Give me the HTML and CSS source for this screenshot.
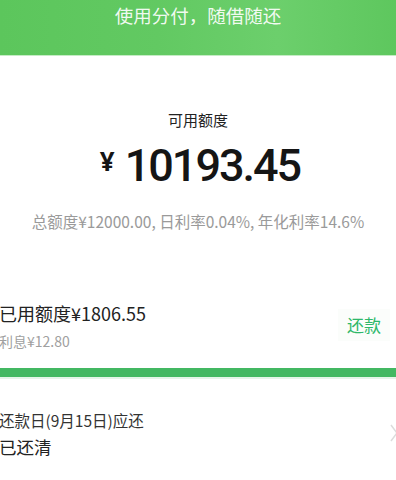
FILE: index.html
```html
<!DOCTYPE html>
<html lang="zh">
<head>
<meta charset="utf-8">
<link rel="stylesheet" href="styles.css">
</head>
<body>
<div class="header">使用分付，随借随还</div>
<section class="quota">
  <div class="quota-label">可用额度</div>
  <div class="quota-amount"><span class="yen">¥</span>10193.45</div>
  <div class="quota-info">总额度¥12000.00, 日利率0.04%, 年化利率14.6%</div>
</section>
<section class="used">
  <div class="used-text">
    <div class="used-title">已用额度¥1806.55</div>
    <div class="used-sub">利息¥12.80</div>
  </div>
  <div class="repay-btn">还款</div>
</section>
<div class="bar"></div>
<section class="due">
  <div class="due-text">
    <div class="due-title">还款日(9月15日)应还</div>
    <div class="due-status">已还清</div>
  </div>
  <svg class="chevron" width="10" height="20" viewBox="0 0 10 20"><path d="M2 2 L8 10 L2 18" fill="none" stroke="#dcdcdc" stroke-width="1.5"/></svg>
</section>
</body>
</html>
```
FILE: styles.css
```css
html, body {
  margin: 0;
  padding: 0;
  background: #fff;
  font-family: "Noto Sans CJK SC", "Noto Sans", sans-serif;
  width: 396px;
  height: 480px;
  overflow: hidden;
}
.header {
  height: 56px;
  background: linear-gradient(90deg, #5cc65c 0%, #62c962 40%, #6ccf6c 70%, #5ec75e 100%);
  color: rgba(255,255,255,0.92);
  font-size: 18.5px;
  text-align: center;
  line-height: 30px;
  box-sizing: border-box;
  border-bottom: 1px solid #c5ecc5;
}
.quota {
  display: flex;
  flex-direction: column;
  align-items: center;
  padding-top: 52px;
}
.quota-label {
  font-size: 15px;
  color: #222;
  line-height: 24px;
}
.quota-amount {
  margin-top: 3px;
  font-family: Roboto, "Noto Sans", sans-serif;
  font-size: 45px;
  font-weight: 500;
  color: #151515;
  line-height: 52px;
  letter-spacing: -2px;
  padding-left: 4px;
}
.yen {
  font-family: "Noto Sans", sans-serif;
  font-size: 26px;
  margin-right: 10px;
  vertical-align: 10px;
  font-weight: 700;
  letter-spacing: 0;
}
.quota-info {
  margin-top: 18px;
  font-size: 15.5px;
  color: #9a9a9a;
  line-height: 22px;
}
.used {
  display: flex;
  align-items: center;
  justify-content: space-between;
  padding: 0 6px 0 0;
  margin-top: 68px;
}
.used-title {
  font-size: 18px;
  color: #222;
  line-height: 26px;
  margin-left: -1px;
}
.used-sub {
  font-size: 14px;
  color: #a0a0a0;
  line-height: 22px;
  margin-top: 4px;
  margin-left: -1px;
}
.repay-btn {
  font-size: 17px;
  color: #2eb86a;
  background: #fbfdfb;
  padding: 3px 9px;
  line-height: 26px;
  margin-top: -2px;
}
.bar {
  height: 9px;
  background: #43b862;
  margin-top: 16px;
  border-bottom: 2px solid #e4f5e8;
}
.due {
  display: flex;
  align-items: center;
  justify-content: space-between;
  margin-top: 30px;
}
.due-title {
  font-size: 15.5px;
  color: #333;
  line-height: 22px;
  margin-left: -1px;
}
.due-status {
  font-size: 17.5px;
  color: #222;
  line-height: 28px;
  margin-top: 2px;
  margin-left: -1px;
}
.chevron {
  margin-right: -3px;
  margin-top: -4px;
}
```
